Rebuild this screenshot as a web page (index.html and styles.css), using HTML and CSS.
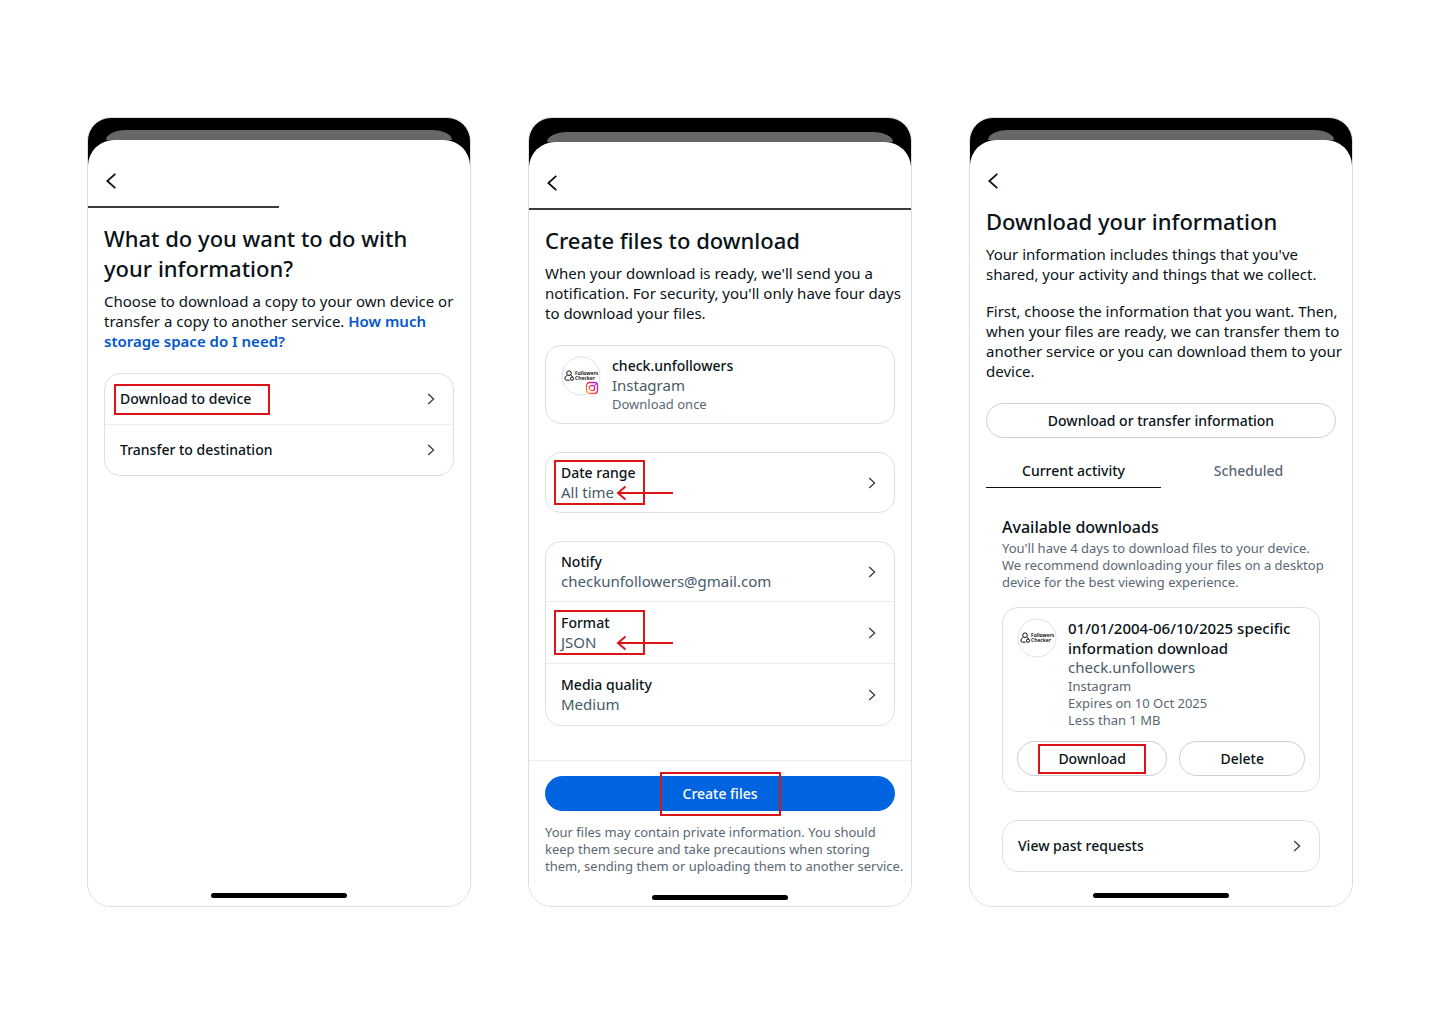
FILE: index.html
```
<!DOCTYPE html>
<html lang="en">
<head>
    <meta charset="UTF-8">
    <meta name="viewport" content="width=device-width, initial-scale=1.0">
    <title>Download your information</title>
    <link rel="stylesheet" href="styles.css">
</head>
<body>
    <!-- shared icons -->
    <svg class="sprite" aria-hidden="true">
      <symbol id="back" viewBox="0 0 12 18">
        <path d="M10.3 1.8 2.3 9l8 7.2" />
      </symbol>
      <symbol id="chevron" viewBox="0 0 8 12">
        <path d="M1.2 1 6.6 6l-5.4 5" />
      </symbol>
      <symbol id="arrow" viewBox="0 0 58 16">
        <path d="M57 8H2.5M9.5 1.5 2 8l7.5 6.5" />
      </symbol>
    </svg>

    <main class="screens">
      <section class="phone">
        <div class="status"></div>
        <div class="sheet">
          <header class="bar">
            <button type="button" class="back" aria-label="Back"><svg><use href="#back" /></svg></button>
          </header>
          <div class="progress half"></div>
          <div class="content">
            <h1>What do you want to do with your information?</h1>
            <p>Choose to download a copy to your own device or transfer a copy to another service. <a href="#">How much storage space do I need?</a></p>
            <div class="card first">
              <button type="button" class="row">
                <span class="label mark mark-device">Download to device</span>
                <svg class="chevron"><use href="#chevron" /></svg>
              </button>
              <button type="button" class="row">
                <span class="label">Transfer to destination</span>
                <svg class="chevron"><use href="#chevron" /></svg>
              </button>
            </div>
          </div>
          <div class="home"></div>
        </div>
      </section>

      <section class="phone middle">
        <div class="status"></div>
        <div class="sheet">
          <header class="bar">
            <button type="button" class="back" aria-label="Back"><svg><use href="#back" /></svg></button>
          </header>
          <div class="progress"></div>
          <div class="content">
            <h1>Create files to download</h1>
            <p>When your download is ready, we'll send you a notification. For security, you'll only have four days to download your files.</p>
            <div class="card first account">
              <div class="photo">
                <svg class="avatar" viewBox="0 0 40 40">
                  <circle cx="20" cy="20" r="19" fill="#fff" stroke="#dfe2e5" />
                  <g fill="none" stroke="#111">
                    <circle cx="8" cy="17.2" r="2.3" />
                    <path d="M6.4 19.2c-1.8 1-2.6 2.3-2.4 3.8.1.8.7 1.2 1.5 1.2h3.2M9.7 19.2c.9.4 1.5 1 1.9 1.7" />
                    <circle cx="11" cy="22.7" r="1.6" />
                  </g>
                  <text x="14" y="19">Followers</text>
                  <text x="14" y="24">Checker</text>
                </svg>
                <svg class="badge" viewBox="0 0 14 14">
                  <defs>
                    <linearGradient id="insta" x1="0" y1="1" x2="1" y2="0">
                      <stop offset="0" stop-color="#ffb52e" />
                      <stop offset=".5" stop-color="#f5204f" />
                      <stop offset="1" stop-color="#9a24e8" />
                    </linearGradient>
                  </defs>
                  <rect width="14" height="14" rx="4" fill="#fff" />
                  <g fill="none" stroke="url(#insta)" stroke-width="1.3">
                    <rect x="1.5" y="1.5" width="11" height="11" rx="3" />
                    <circle cx="7" cy="7" r="2.7" />
                  </g>
                  <circle cx="10.3" cy="3.8" r=".8" fill="#d41fa8" />
                </svg>
              </div>
              <div>
                <div class="label">check.unfollowers</div>
                <div class="value">Instagram</div>
                <div class="small once">Download once</div>
              </div>
            </div>
            <div class="card">
              <button type="button" class="row tall">
                <span class="field mark mark-field">
                  <span class="label">Date range</span>
                  <span class="value">All time</span>
                  <svg class="arrow"><use href="#arrow" /></svg>
                </span>
                <svg class="chevron"><use href="#chevron" /></svg>
              </button>
            </div>
            <div class="card">
              <button type="button" class="row tall">
                <span class="field">
                  <span class="label">Notify</span>
                  <span class="value">checkunfollowers@gmail.com</span>
                </span>
                <svg class="chevron"><use href="#chevron" /></svg>
              </button>
              <button type="button" class="row tall">
                <span class="field mark mark-field">
                  <span class="label">Format</span>
                  <span class="value">JSON</span>
                  <svg class="arrow"><use href="#arrow" /></svg>
                </span>
                <svg class="chevron"><use href="#chevron" /></svg>
              </button>
              <button type="button" class="row tall">
                <span class="field">
                  <span class="label">Media quality</span>
                  <span class="value">Medium</span>
                </span>
                <svg class="chevron"><use href="#chevron" /></svg>
              </button>
            </div>
          </div>
          <footer class="actions">
            <button type="button" class="pill primary"><span class="mark mark-create">Create files</span></button>
            <p class="small">Your files may contain private information. You should keep them secure and take precautions when storing them, sending them or uploading them to another service.</p>
          </footer>
          <div class="home"></div>
        </div>
      </section>

      <section class="phone">
        <div class="status"></div>
        <div class="sheet">
          <header class="bar">
            <button type="button" class="back" aria-label="Back"><svg><use href="#back" /></svg></button>
          </header>
          <div class="content plain">
            <h1>Download your information</h1>
            <p>Your information includes things that you've shared, your activity and things that we collect.</p>
            <p>First, choose the information that you want. Then, when your files are ready, we can transfer them to another service or you can download them to your device.</p>
            <button type="button" class="pill wide">Download or transfer information</button>
            <div class="tabs">
              <button type="button" class="tab selected">Current activity</button>
              <button type="button" class="tab">Scheduled</button>
            </div>
            <div class="downloads">
              <h2>Available downloads</h2>
              <p class="small">You'll have 4 days to download files to your device. We recommend downloading your files on a desktop device for the best viewing experience.</p>
              <div class="card file">
                <div class="info">
                  <svg class="avatar" viewBox="0 0 40 40">
                    <circle cx="20" cy="20" r="19" fill="#fff" stroke="#dfe2e5" />
                    <g fill="none" stroke="#111">
                      <circle cx="8" cy="17.2" r="2.3" />
                      <path d="M6.4 19.2c-1.8 1-2.6 2.3-2.4 3.8.1.8.7 1.2 1.5 1.2h3.2M9.7 19.2c.9.4 1.5 1 1.9 1.7" />
                      <circle cx="11" cy="22.7" r="1.6" />
                    </g>
                    <text x="14" y="19">Followers</text>
                    <text x="14" y="24">Checker</text>
                  </svg>
                  <div>
                    <div class="label name">01/01/2004-06/10/2025 specific information download</div>
                    <div class="value">check.unfollowers</div>
                    <div class="small once">Instagram</div>
                    <div class="small">Expires on 10 Oct 2025</div>
                    <div class="small">Less than 1 MB</div>
                  </div>
                </div>
                <div class="buttons">
                  <button type="button" class="pill"><span class="mark mark-download">Download</span></button>
                  <button type="button" class="pill">Delete</button>
                </div>
              </div>
              <div class="card">
                <button type="button" class="row">
                  <span class="label">View past requests</span>
                  <svg class="chevron"><use href="#chevron" /></svg>
                </button>
              </div>
            </div>
          </div>
          <div class="home"></div>
        </div>
      </section>
    </main>
</body>
</html>
```

FILE: styles.css
```
*,
*::before,
*::after {
  box-sizing: border-box;
}
body {
  margin: 0;
  background: #fff;
  color: #0a1317;
  font-family: "Noto Sans", sans-serif;
  font-size: 14px;
  line-height: 20px;
}
button {
  margin: 0;
  padding: 0;
  border: none;
  background: none;
  color: inherit;
  font: inherit;
  text-align: left;
  cursor: pointer;
}
h1,
h2,
p {
  margin: 0;
}
svg {
  display: block;
}
.sprite {
  position: absolute;
  width: 0;
  height: 0;
}
.screens {
  min-height: 100vh;
  padding: 0 87px;
  display: grid;
  grid-template-columns: repeat(3, 1fr);
  align-content: center;
  gap: 57px;
}
.phone {
  min-height: 790px;
  display: flex;
  flex-direction: column;
  border: 1px solid #dcdfe1;
  border-radius: 24px;
  background: linear-gradient(#000 48px, #fff 48px);
  overflow: hidden;
}
.status {
  height: 22px;
  padding: 12px 18px 0;
}
.middle .status {
  height: 24px;
  padding-top: 14px;
}
/* edge of the sheet behind the open one */
.status::before {
  content: "";
  display: block;
  height: 10px;
  border-radius: 20px 20px 0 0 / 10px 10px 0 0;
  background: #676767;
}
.sheet {
  flex: 1;
  display: flex;
  flex-direction: column;
  border-radius: 26px 26px 0 0;
  background: #fff;
}
.bar {
  height: 66px;
  padding: 32px 17px 0;
}
.back svg {
  width: 12px;
  height: 18px;
  fill: none;
  stroke: #0a1317;
  stroke-width: 1.8;
}
.progress {
  height: 2px;
  background: #3a3b3d;
}
.half {
  width: 50%;
}
.content {
  flex: 1;
  padding: 15px 16px 0;
}
.plain {
  padding-top: 0;
}
h1 {
  margin-bottom: 8px;
  font-size: 22px;
  line-height: 30px;
  font-weight: 500;
}
h2 {
  font-size: 16px;
  line-height: 25px;
  font-weight: 500;
}
p {
  margin-right: -8px;
  font-size: 15px;
}
p + p {
  margin-top: 17px;
}
p a {
  color: #0457cb;
  font-weight: 600;
  text-decoration: none;
}
.label,
.value {
  display: block;
}
.label {
  line-height: 20px;
  font-weight: 500;
}
.value {
  color: #465a69;
  font-size: 15px;
  line-height: 19px;
}
.small {
  color: #5a6872;
  font-size: 13px;
  line-height: 17px;
}
.once {
  margin-top: 1px;
}
.card {
  margin-top: 28px;
  border: 1px solid #dbe0e3;
  border-radius: 16px;
}
.card.first {
  margin-top: 22px;
}
.row {
  width: 100%;
  min-height: 50px;
  padding: 0 18px 0 15px;
  display: flex;
  align-items: center;
  justify-content: space-between;
}
.row + .row {
  min-height: 51px;
  border-top: 1px solid #eceff1;
}
.row.tall {
  min-height: 59px;
}
.tall + .row.tall {
  min-height: 62px;
}
.field {
  display: block;
}
.chevron {
  width: 8px;
  height: 12px;
  fill: none;
  stroke: #333e46;
  stroke-width: 1.3;
}
.account {
  padding: 10px 15px;
  display: flex;
  gap: 11px;
}
.avatar {
  width: 40px;
  height: 40px;
  flex: none;
  font-size: 5px;
  font-weight: 600;
}
.photo {
  position: relative;
}
.badge {
  position: absolute;
  left: 24px;
  top: 25px;
  width: 14px;
  height: 14px;
}
.pill {
  height: 35px;
  border: 1px solid #cbd0d4;
  border-radius: 18px;
  font-weight: 500;
  text-align: center;
}
.primary {
  width: 100%;
  border-color: #0064e0;
  background: #0064e0;
  color: #fff;
}
.wide {
  width: 100%;
  margin-top: 22px;
}
.tabs {
  margin-top: 16px;
  display: grid;
  grid-template-columns: 1fr 1fr;
}
.tab {
  height: 34px;
  border-bottom: 1px solid transparent;
  color: #5a6872;
  font-weight: 500;
  text-align: center;
}
.tab.selected {
  border-color: #0a1317;
  color: #0a1317;
}
.downloads {
  padding: 27px 16px 0;
}
.file {
  margin-top: 16px;
  padding: 10px 14px 15px;
}
.info {
  display: flex;
  gap: 11px;
}
.name {
  font-size: 15px;
}
.buttons {
  margin-top: 12px;
  display: flex;
  gap: 12px;
}
.buttons .pill {
  flex: 6;
}
.buttons .pill + .pill {
  flex: 5;
}
.actions {
  margin-top: 34px;
  padding: 15px 16px 0;
  border-top: 1px solid #eceff1;
}
.actions .small {
  margin-top: 13px;
  margin-right: -12px;
}
.home {
  width: 136px;
  height: 5px;
  margin: 20px auto 8px;
  border-radius: 3px;
  background: #000;
}
.middle .home {
  margin-bottom: 6px;
}
/* red guide marks laid over the screens */
.mark {
  position: relative;
  display: inline-block;
}
.mark::after {
  content: "";
  position: absolute;
  border: 2px solid #dc1418;
}
.mark-device::after {
  inset: -5px -19px -6px -6px;
}
.mark-field::after {
  left: -7px;
  top: -3px;
  width: 91px;
  height: 45px;
}
.mark-create::after {
  inset: -12px -23px;
}
.mark-download::after {
  inset: -5px -20px;
}
.arrow {
  position: absolute;
  left: 55px;
  top: 22px;
  width: 58px;
  height: 16px;
  fill: none;
  stroke: #dc1418;
  stroke-width: 2;
}
```
